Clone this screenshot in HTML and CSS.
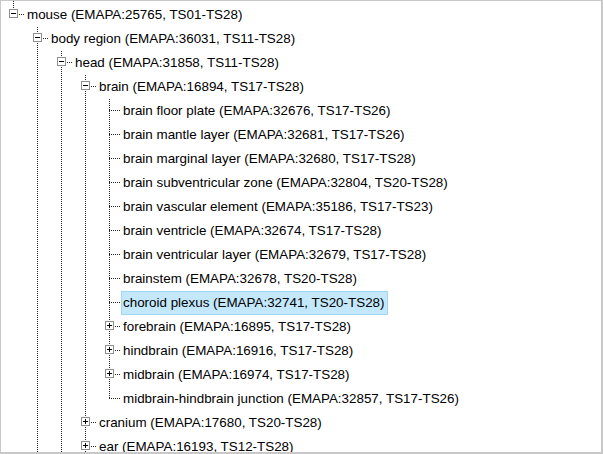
FILE: index.html
```html
<!DOCTYPE html>
<html>
<head>
<meta charset="utf-8">
<link rel="stylesheet" href="styles.css">
</head>
<body>
<div class="tree">
  <ul class="level">
    <li class="node root last">
      <div class="row"><span class="ins"><svg class="exp" width="9" height="9" viewBox="0 0 9 9"><rect x="0.5" y="0.5" width="8" height="8" fill="#fff" stroke="#8e8e8e"/><path d="M2 4.5h5" stroke="#000"/></svg></span><a class="label">mouse (EMAPA:25765, TS01-TS28)</a></div>
      <ul class="level">
        <li class="node">
          <div class="row"><span class="ins"><svg class="exp" width="9" height="9" viewBox="0 0 9 9"><rect x="0.5" y="0.5" width="8" height="8" fill="#fff" stroke="#8e8e8e"/><path d="M2 4.5h5" stroke="#000"/></svg></span><a class="label">body region (EMAPA:36031, TS11-TS28)</a></div>
          <ul class="level">
            <li class="node">
              <div class="row"><span class="ins"><svg class="exp" width="9" height="9" viewBox="0 0 9 9"><rect x="0.5" y="0.5" width="8" height="8" fill="#fff" stroke="#8e8e8e"/><path d="M2 4.5h5" stroke="#000"/></svg></span><a class="label">head (EMAPA:31858, TS11-TS28)</a></div>
              <ul class="level">
                <li class="node">
                  <div class="row"><span class="ins"><svg class="exp" width="9" height="9" viewBox="0 0 9 9"><rect x="0.5" y="0.5" width="8" height="8" fill="#fff" stroke="#8e8e8e"/><path d="M2 4.5h5" stroke="#000"/></svg></span><a class="label">brain (EMAPA:16894, TS17-TS28)</a></div>
                  <ul class="level">
                    <li class="node"><div class="row"><span class="ins"></span><a class="label">brain floor plate (EMAPA:32676, TS17-TS26)</a></div></li>
                    <li class="node"><div class="row"><span class="ins"></span><a class="label">brain mantle layer (EMAPA:32681, TS17-TS26)</a></div></li>
                    <li class="node"><div class="row"><span class="ins"></span><a class="label">brain marginal layer (EMAPA:32680, TS17-TS28)</a></div></li>
                    <li class="node"><div class="row"><span class="ins"></span><a class="label">brain subventricular zone (EMAPA:32804, TS20-TS28)</a></div></li>
                    <li class="node"><div class="row"><span class="ins"></span><a class="label">brain vascular element (EMAPA:35186, TS17-TS23)</a></div></li>
                    <li class="node"><div class="row"><span class="ins"></span><a class="label">brain ventricle (EMAPA:32674, TS17-TS28)</a></div></li>
                    <li class="node"><div class="row"><span class="ins"></span><a class="label">brain ventricular layer (EMAPA:32679, TS17-TS28)</a></div></li>
                    <li class="node"><div class="row"><span class="ins"></span><a class="label">brainstem (EMAPA:32678, TS20-TS28)</a></div></li>
                    <li class="node"><div class="row"><span class="ins"></span><a class="label selected">choroid plexus (EMAPA:32741, TS20-TS28)</a></div></li>
                    <li class="node"><div class="row"><span class="ins"><svg class="exp" width="9" height="9" viewBox="0 0 9 9"><rect x="0.5" y="0.5" width="8" height="8" fill="#fff" stroke="#8e8e8e"/><path d="M2 4.5h5M4.5 2v5" stroke="#000"/></svg></span><a class="label">forebrain (EMAPA:16895, TS17-TS28)</a></div></li>
                    <li class="node"><div class="row"><span class="ins"><svg class="exp" width="9" height="9" viewBox="0 0 9 9"><rect x="0.5" y="0.5" width="8" height="8" fill="#fff" stroke="#8e8e8e"/><path d="M2 4.5h5M4.5 2v5" stroke="#000"/></svg></span><a class="label">hindbrain (EMAPA:16916, TS17-TS28)</a></div></li>
                    <li class="node"><div class="row"><span class="ins"><svg class="exp" width="9" height="9" viewBox="0 0 9 9"><rect x="0.5" y="0.5" width="8" height="8" fill="#fff" stroke="#8e8e8e"/><path d="M2 4.5h5M4.5 2v5" stroke="#000"/></svg></span><a class="label">midbrain (EMAPA:16974, TS17-TS28)</a></div></li>
                    <li class="node last"><div class="row"><span class="ins"></span><a class="label">midbrain-hindbrain junction (EMAPA:32857, TS17-TS26)</a></div></li>
                  </ul>
                </li>
                <li class="node"><div class="row"><span class="ins"><svg class="exp" width="9" height="9" viewBox="0 0 9 9"><rect x="0.5" y="0.5" width="8" height="8" fill="#fff" stroke="#8e8e8e"/><path d="M2 4.5h5M4.5 2v5" stroke="#000"/></svg></span><a class="label">cranium (EMAPA:17680, TS20-TS28)</a></div></li>
                <li class="node"><div class="row"><span class="ins"><svg class="exp" width="9" height="9" viewBox="0 0 9 9"><rect x="0.5" y="0.5" width="8" height="8" fill="#fff" stroke="#8e8e8e"/><path d="M2 4.5h5M4.5 2v5" stroke="#000"/></svg></span><a class="label">ear (EMAPA:16193, TS12-TS28)</a></div></li>
              </ul>
            </li>
          </ul>
        </li>
      </ul>
    </li>
  </ul>
</div>
</body>
</html>
```

FILE: styles.css
```css
html, body {
  margin: 0;
  padding: 0;
  background: #fff;
}

.tree {
  box-sizing: border-box;
  width: 603px;
  height: 454px;
  overflow: hidden;
  background: #fff;
  border-style: solid;
  border-color: #c8c8c8;
  border-width: 1px 2px 2px 1px;
  font-family: "Liberation Sans", Arial, sans-serif;
  font-size: 13.4px;
  color: #000;
}

.level {
  list-style: none;
  margin: 0;
  padding: 0;
}

.level .level {
  margin-left: 24px;
}

.node {
  margin: 0;
  padding: 0;
  background-image: repeating-linear-gradient(to bottom, #222 0 1px, transparent 1px 2px);
  background-size: 1px 100%;
  background-position: 12px 0;
  background-repeat: no-repeat;
}

.node.last {
  background-size: 1px 12px;
}

.node.root {
  padding-top: 2px;
  background-size: 1px 14px;
}

.row {
  display: flex;
  height: 24px;
  align-items: flex-start;
  white-space: nowrap;
}

.ins {
  flex: 0 0 24px;
  width: 24px;
  height: 24px;
  background-image: repeating-linear-gradient(to right, #222 0 1px, transparent 1px 2px);
  background-size: 12px 1px;
  background-position: 12px 11px;
  background-repeat: no-repeat;
}

.exp {
  display: block;
  margin: 6px 0 0 8px;
}

.label {
  display: block;
  height: 22px;
  line-height: 22px;
  border: 1px solid transparent;
  padding: 0 2px 0 1px;
  color: #000;
  cursor: pointer;
}

.label.selected {
  background: #c4e8fb;
  border-color: #9fd7f3;
}
```
